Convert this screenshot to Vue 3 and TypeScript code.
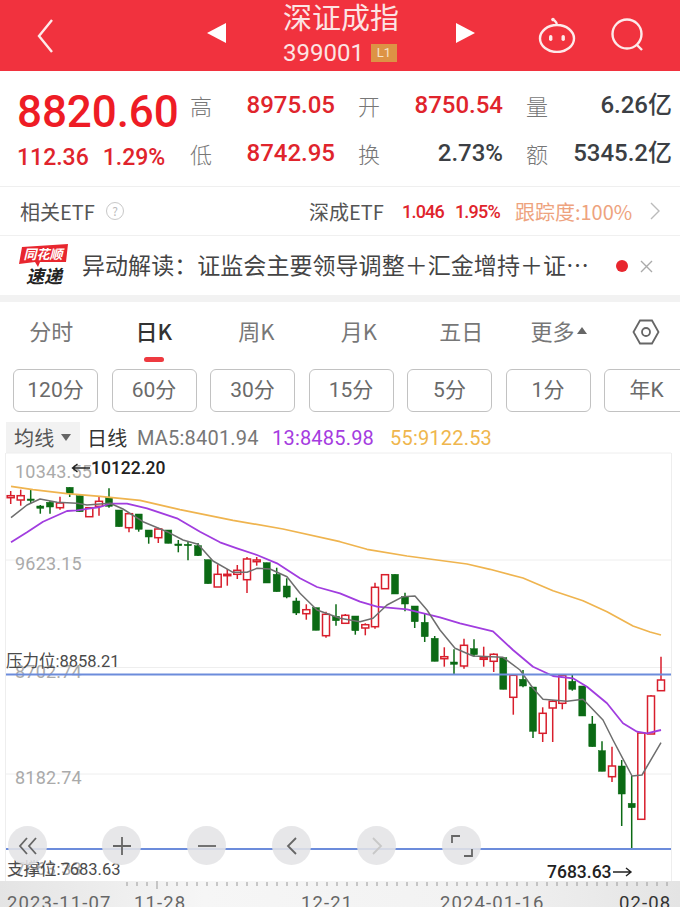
<template>
  <div class="page">
    <header class="top">
      <svg class="top__back" width="16" height="34" viewBox="0 0 16 34"><path d="M15 1 2 17l13 16" /></svg>
      <div class="top__center">
        <span class="arrow arrow--left"></span>
        <div class="top__name">
          <h1>深证成指</h1>
          <div class="top__code">399001<span class="badge">L1</span></div>
        </div>
        <span class="arrow arrow--right"></span>
      </div>
      <svg class="top__robot" width="40" height="36" viewBox="0 0 40 36">
        <path d="M20 8a17 13.5 0 1 1 0 27 17 13.5 0 1 1 0-27ZM20 8c0-3-2-4-3-5" />
        <circle cx="16" cy="2.6" r="1.8" class="solid" />
        <rect x="12" y="18" width="3.4" height="6" rx="1.7" class="solid" />
        <rect x="24.5" y="18" width="3.4" height="6" rx="1.7" class="solid" />
      </svg>
      <svg class="top__search" width="36" height="34" viewBox="0 0 36 34">
        <circle cx="17" cy="16" r="14.5" />
        <path d="m27 27 5 5" />
      </svg>
    </header>

    <section class="quote">
      <div class="quote__main">
        <div class="quote__price">8820.60</div>
        <div class="quote__change"><span>112.36</span><span>1.29%</span></div>
      </div>
      <div class="quote__grid">
        <template v-for="cell in quoteCells" :key="cell.label">
          <span class="quote__label">{{ cell.label }}</span>
          <span class="quote__value" :class="{ 'quote__value--up': cell.up }">{{ cell.value }}</span>
        </template>
      </div>
    </section>

    <section class="etf">
      <span class="etf__title">相关ETF</span>
      <span class="etf__help">?</span>
      <span class="etf__name">深成ETF</span>
      <span class="etf__num">1.046</span>
      <span class="etf__num etf__num--pct">1.95%</span>
      <span class="etf__track">跟踪度:100%</span>
      <svg class="etf__more" width="10" height="18" viewBox="0 0 10 18"><path d="m1 1 8 8-8 8" /></svg>
    </section>

    <section class="news">
      <svg class="news__logo" width="50" height="44" viewBox="0 0 50 44">
        <polygon points="3,3 49,0 47,18 21,18 19,23 16,18 0,20" fill="#e8262e" />
        <text x="24" y="15" class="news__logo-a">同花顺</text>
        <text x="25" y="39" class="news__logo-b">速递</text>
      </svg>
      <p class="news__text">异动解读：证监会主要领导调整＋汇金增持＋证…</p>
      <span class="news__dot"></span>
      <svg class="news__close" width="13" height="13" viewBox="0 0 13 13"><path d="m1 1 11 11M12 1 1 12" /></svg>
    </section>

    <nav class="tabs">
      <span v-for="tab in tabs" :key="tab" class="tabs__item" :class="{ 'tabs__item--active': tab === '日K' }">{{ tab }}</span>
      <span class="tabs__item tabs__more">更多<i></i></span>
      <svg class="tabs__gear" width="28" height="28" viewBox="0 0 28 28">
        <path d="M8 2.5h12L26.5 14 20 25.500H8L1.500 14Z" />
        <circle cx="14" cy="14" r="4" />
      </svg>
    </nav>

    <div class="chips">
      <span v-for="chip in chips" :key="chip" class="chip">{{ chip }}</span>
    </div>

    <div class="legend">
      <span class="legend__pick">均线<i></i></span>
      <span class="legend__kind">日线</span>
      <span class="legend__ma">MA5:8401.94</span>
      <span class="legend__ma legend__ma--13">13:8485.98</span>
      <span class="legend__ma legend__ma--55">55:9122.53</span>
    </div>

    <div class="chart">
      <svg width="680" height="455" viewBox="0 452 680 455">
        <defs>
          <linearGradient id="fade" x1="0" y1="0" x2="1" y2="0">
            <stop offset="0" stop-color="#e4e4e4" />
            <stop offset="0.3" stop-color="#f6f6f6" />
            <stop offset="0.7" stop-color="#f2f2f2" />
            <stop offset="1" stop-color="#e4e4e4" />
          </linearGradient>
        </defs>
        <rect x="0" y="881" width="680" height="26" fill="url(#fade)" />
        <g class="grid">
          <path d="M5.500 453V881M671.500 453V881" />
          <path v-for="y in gridLines" :key="y" :d="`M6 ${y}H671`" />
        </g>
        <text x="15" y="478" class="axis">10343.55</text>
        <text x="15" y="570" class="axis">9623.15</text>
        <text x="15" y="678" class="axis">8702.74</text>
        <text x="15" y="784" class="axis">8182.74</text>
        <text x="15" y="875" class="axis">7663.33</text>

        <g v-for="(c, i) in candles" :key="i" :class="c[5] ? 'up' : 'down'">
          <line :x1="c[0]" :x2="c[0]" :y1="c[3]" :y2="c[4]" />
          <rect :x="c[0] - 3.500" :y="c[1]" width="7" :height="c[2] - c[1]" />
        </g>

        <polyline class="ma ma--55" :points="ma55" />
        <polyline class="ma ma--13" :points="ma13" />
        <polyline class="ma ma--5" :points="ma5" />

        <path class="level" d="M6 674.500H671M6 849H671" />

        <text x="6" y="667" class="tag">压力位:8858.21</text>
        <text x="7" y="875" class="tag">支撑位:7683.63</text>
        <path class="pointer" d="M90 468H72.500m5-4-5 4 5 4" />
        <text x="91" y="474" class="mark">10122.20</text>
        <text x="547" y="878" class="mark">7683.63</text>
        <path class="pointer" d="M613 872h18m-5-4 5 4-5 4" />

        <path v-for="t in ticks" :key="t" class="tick" :d="`M${t} ${(t - 157) % 168 === 0 ? 881 : 882}v${(t - 157) % 168 === 0 ? 8 : 4}`" />
        <text x="7" y="909" class="date">2023-11-07</text>
        <text x="134" y="909" class="date">11-28</text>
        <text x="301" y="909" class="date">12-21</text>
        <text x="440" y="909" class="date">2024-01-16</text>
        <text x="619" y="909" class="date date--end">02-08</text>
      </svg>

      <div class="tools">
        <span class="tool tool--first">
          <svg width="20" height="20" viewBox="0 0 20 20"><path d="M9 2 2 10l7 8M18 2l-7 8 7 8" /></svg>
        </span>
        <span class="tool">
          <svg width="20" height="20" viewBox="0 0 20 20"><path d="M10 1v18M1 10h18" /></svg>
        </span>
        <span class="tool">
          <svg width="20" height="20" viewBox="0 0 20 20"><path d="M1 10h18" /></svg>
        </span>
        <span class="tool">
          <svg width="20" height="20" viewBox="0 0 20 20"><path d="m14 2-8 8 8 8" /></svg>
        </span>
        <span class="tool tool--off">
          <svg width="20" height="20" viewBox="0 0 20 20"><path d="m6 2 8 8-8 8" /></svg>
        </span>
        <span class="tool">
          <svg width="22" height="22" viewBox="0 0 22 22"><path d="M1 8V1h8M21 14v7h-8" /></svg>
        </span>
      </div>
    </div>
  </div>
</template>

<script setup lang="ts">
type Candle = [x: number, top: number, bottom: number, high: number, low: number, up: boolean]

const quoteCells = [
  { label: '高', value: '8975.05', up: true },
  { label: '开', value: '8750.54', up: true },
  { label: '量', value: '6.26亿', up: false },
  { label: '低', value: '8742.95', up: true },
  { label: '换', value: '2.73%', up: false },
  { label: '额', value: '5345.2亿', up: false },
]

const tabs = ['分时', '日K', '周K', '月K', '五日']
const chips = ['120分', '60分', '30分', '15分', '5分', '1分', '年K']
const gridLines = [453, 560, 667.5, 774]

// read off the reference candle by candle
const candles: Candle[] = [
  [10.7, 495.7, 497.7, 491, 504, true],
  [20.7, 495.7, 500, 489.7, 505.7, true],
  [30.7, 499, 500.5, 489.7, 503, false],
  [40.3, 506, 508.3, 505, 513.7, false],
  [50, 502.3, 507, 501, 513.7, false],
  [60, 503, 507.7, 496.7, 509.7, true],
  [69.7, 487.3, 493.7, 487.3, 497, false],
  [79.7, 495.7, 511.7, 495.7, 511.7, false],
  [89.3, 507.7, 516.7, 507.7, 516.7, true],
  [99, 501.3, 506.3, 497, 515.7, true],
  [109, 497.7, 506.3, 488.3, 507.7, false],
  [119, 510, 526.7, 510, 526.7, false],
  [129, 513.7, 527.7, 513, 532.3, true],
  [138.7, 514, 529.3, 514, 531.7, false],
  [148.7, 530, 537, 530, 543.7, false],
  [158.3, 529, 537.7, 527.7, 543, true],
  [168.3, 530, 543.3, 530, 543.3, false],
  [178.3, 544, 545.7, 540, 552.3, false],
  [188, 544.3, 545.7, 541, 560.3, false],
  [198, 545.7, 555.7, 543, 556, false],
  [208, 559.7, 583.7, 559.7, 583.7, false],
  [217.7, 574.3, 587, 564.3, 587, true],
  [227.3, 574.3, 575.7, 569, 585.7, true],
  [237.3, 570.3, 574.3, 565, 579, true],
  [247, 559, 579.7, 557, 593, true],
  [256.7, 560, 561.7, 557, 565.7, true],
  [266.7, 562.7, 583, 562.7, 583, false],
  [276.7, 574.3, 591.7, 567.7, 591.7, false],
  [286.7, 586, 597, 578.3, 598.3, false],
  [296.3, 601, 613, 597.7, 615, false],
  [306.3, 609.7, 613.7, 604.3, 619.7, true],
  [316, 607.7, 630.3, 607.7, 630.3, false],
  [326, 614.3, 635.7, 611.7, 637.7, true],
  [336, 616.3, 620.7, 604.3, 625.7, false],
  [345.3, 615.3, 623.3, 614, 624, true],
  [355.3, 616, 630.7, 616, 634.7, false],
  [365.3, 624.7, 628, 623.3, 635.3, true],
  [375, 587.3, 626.7, 582.7, 628.7, true],
  [385, 574.7, 588.7, 574.7, 588.7, true],
  [395, 574.3, 594, 574.3, 594, false],
  [405, 596.7, 604, 592.7, 611.3, false],
  [414.7, 606, 621.7, 606, 628, false],
  [424.7, 622.3, 636.7, 613.3, 642, false],
  [434.7, 638.3, 661.3, 636, 661.3, false],
  [444.3, 656.7, 658.7, 647.3, 666.7, true],
  [454, 662, 664.3, 649.3, 674, false],
  [464, 645.3, 666, 638.7, 668.7, true],
  [474, 648.7, 654.7, 639.3, 656.7, false],
  [483.7, 657.7, 659.3, 646.7, 666.7, true],
  [493.7, 654.3, 661.3, 653.3, 672, true],
  [503.3, 657.7, 689.3, 657.7, 689.3, false],
  [513.3, 675.3, 697.3, 675.3, 714.7, true],
  [523, 679.3, 686, 670, 687.3, false],
  [533, 687, 731.3, 687, 738, false],
  [542.7, 713.3, 733.3, 707.3, 742, true],
  [552.7, 701.3, 708, 700, 742, true],
  [562.3, 675.3, 703.3, 675, 709.3, true],
  [572.3, 681.3, 689.3, 674.7, 690.7, false],
  [582.3, 686, 716, 686, 716, false],
  [592.3, 724, 746.7, 716, 746.7, false],
  [602, 750.7, 771.3, 741.3, 771.3, false],
  [612, 766, 776.7, 746.7, 782, true],
  [621.7, 766, 794, 760, 826, false],
  [631.7, 803.3, 807.7, 776, 848.3, false],
  [641.3, 733, 819.3, 733, 819.3, true],
  [651, 696, 734, 695, 734, true],
  [661, 680, 690.7, 656.7, 690.7, true],
]

const ma55 = '11,486.3 33,489.7 67,493.7 100,496.3 140,500.3 180,509.7 233,520.3 283,529 340,541.7 367,549.3 407,556 467,564 490,569.3 523,578 553,590.7 583,600.7 607,611.7 633,626 650,632 661,635'
const ma13 = '11,542.3 27,532.3 43,521.7 67,511 77,510.3 100,507 110,503.7 127,503.7 147,508.3 177,518.3 200,531.7 220,542.3 237,548.3 257,555 277,563.3 300,578.3 317,587 340,593.3 360,601.7 377,606.7 407,609.3 440,617.3 460,623.3 493,631.3 513,650 533,666.7 553,676 573,678.3 587,686.7 607,703.3 623,723.3 637,731.7 647,733.3 661,730'
const ma5 = '11,517.7 27,505 40,499 57,502.3 77,503.3 87,505 110,503.3 123,509 143,521.7 167,531.7 183,540 198,544.3 213,561 233,572.3 247,572.3 257,568.3 270,569 287,576.7 300,593.3 317,610 340,618.3 360,621.7 373,618.3 387,605 403,596.7 415,596 427,610 440,630 455,648.3 473,656 503,657.3 520,670 533,688.3 543,699.3 567,701.3 583,699.3 603,720 613,740 632,776 642,775 661,742.7'

const ticks = Array.from({ length: 55 }, (_, i) => 127 + i * 10)
</script>

<style>
html,
body {
  margin: 0;
  background: #fff;
}
</style>

<style scoped>
.page {
  position: relative;
  width: 680px;
  height: 907px;
  overflow: hidden;
  background: #fff;
  font-family: 'Noto Sans CJK SC', 'Noto Sans', sans-serif;
  color: #444;
}

.top {
  height: 71px;
  background: #f1323e;
  display: flex;
  align-items: center;
  position: relative;
}

.top svg path,
.top svg circle {
  fill: none;
  stroke: #fdeaea;
  stroke-width: 2.4;
}

.top svg .solid {
  fill: #fdeaea;
  stroke: none;
}

.top__back {
  margin-left: 37px;
}

.top__center {
  position: absolute;
  left: 207px;
  width: 268px;
  top: 0;
  height: 71px;
  display: flex;
  align-items: center;
  justify-content: space-between;
}

.arrow {
  width: 0;
  height: 0;
  border-top: 10px solid transparent;
  border-bottom: 10px solid transparent;
  margin-top: -5px;
}

.arrow--left {
  border-right: 19px solid #fff;
}

.arrow--right {
  border-left: 19px solid #fff;
}

.top__name {
  align-self: flex-start;
  text-align: center;
  color: #fce4e4;
}

.top__name h1 {
  margin: 0;
  font-size: 29px;
  font-weight: 400;
  line-height: 32px;
}

.top__code {
  font-family: Roboto, sans-serif;
  font-size: 24px;
  line-height: 28px;
  margin-top: 7px;
  display: flex;
  align-items: center;
}

.badge {
  margin-left: 7px;
  width: 26px;
  height: 18px;
  background: #dd9345;
  color: #f8e3c8;
  font-size: 13px;
  line-height: 18px;
  text-align: center;
}

.top__robot {
  position: absolute;
  left: 537px;
  top: 17px;
}

.top__search {
  position: absolute;
  left: 610px;
  top: 18px;
}

.quote {
  height: 115px;
  display: flex;
  border-bottom: 1px solid #efefef;
}

.quote__main {
  width: 190px;
  padding-left: 17px;
  box-sizing: border-box;
  font-family: Roboto, sans-serif;
  color: #ee1c25;
}

.quote__price {
  font-size: 44px;
  font-weight: 500;
  line-height: 52px;
  margin-top: 15px;
  letter-spacing: -0.1px;
}

.quote__change {
  font-size: 23px;
  font-weight: 500;
  display: flex;
  gap: 14px;
  line-height: 28px;
  margin-top: 6px;
  color: #e0242c;
}

.quote__grid {
  flex: 1;
  padding-top: 17px;
  display: grid;
  grid-template-columns: 22px 146px 22px 146px 22px 124px;
  row-gap: 14px;
  grid-auto-rows: 34px;
  align-items: center;
}

.quote__label {
  font-size: 22px;
  line-height: 30px;
  color: #777;
  font-weight: 300;
}

.quote__value {
  font-family: Roboto, 'Noto Sans CJK SC', sans-serif;
  font-size: 24px;
  line-height: 34px;
  font-weight: 500;
  text-align: right;
  color: #3c3f44;
  padding-right: 23px;
}

.quote__value:nth-child(6n) {
  padding-right: 0;
}

.quote__value--up {
  color: #e0242c;
}

.etf {
  height: 48px;
  display: flex;
  align-items: center;
  padding-left: 20px;
  border-bottom: 1px solid #f0f0f0;
  font-size: 20px;
  color: #555;
}

.etf__title {
  width: 86px;
}

.etf__help {
  width: 16px;
  height: 16px;
  border: 1px solid #c8c8c8;
  border-radius: 50%;
  color: #bbb;
  font-size: 12px;
  line-height: 16px;
  text-align: center;
}

.etf__name {
  margin-left: 185px;
  width: 93px;
}

.etf__num {
  font-family: Roboto, sans-serif;
  font-weight: 500;
  font-size: 18px;
  letter-spacing: -0.8px;
  color: #e0242c;
}

.etf__num--pct {
  margin-left: 11px;
}

.etf__track {
  margin-left: 15px;
  color: #eea37e;
}

.etf__more {
  margin-left: 18px;
}

.etf__more path {
  fill: none;
  stroke: #bbb;
  stroke-width: 1.4;
}

.news {
  height: 59px;
  display: flex;
  align-items: center;
  position: relative;
  padding-left: 19px;
  border-bottom: 7px solid #f2f2f2;
}

.news__logo-a {
  font-size: 13px;
  font-weight: 700;
  font-style: italic;
  fill: #fff;
  text-anchor: middle;
}

.news__logo-b {
  font-size: 18px;
  font-weight: 700;
  font-style: italic;
  fill: #222;
  text-anchor: middle;
}

.news__text {
  margin: -3px 0 0 13px;
  font-size: 23px;
  white-space: nowrap;
  color: #444;
  letter-spacing: 0.05px;
}

.news__dot {
  position: absolute;
  left: 616px;
  top: 24px;
  width: 12px;
  height: 12px;
  border-radius: 50%;
  background: #e8262e;
}

.news__close {
  position: absolute;
  left: 640px;
  top: 24px;
}

.news__close path {
  fill: none;
  stroke: #aaa;
  stroke-width: 1.4;
}

.tabs {
  height: 60px;
  position: relative;
  display: grid;
  grid-template-columns: 102.500px 102.500px 102.500px 102.500px 102.500px 100px 1fr;
  align-items: center;
  font-size: 22px;
  color: #777;
}

.tabs__item {
  text-align: center;
  position: relative;
  padding-bottom: 4px;
}

.tabs__item--active {
  color: #333;
  font-weight: 500;
}

.tabs__item--active::after {
  content: '';
  position: absolute;
  left: 41px;
  width: 20px;
  height: 5px;
  bottom: -12px;
  border-radius: 3px;
  background: #ee3a40;
}

.tabs__more {
  display: flex;
  align-items: center;
  margin-left: 18px;
}

.tabs__more i {
  margin-left: 2px;
  width: 0;
  height: 0;
  border-left: 5px solid transparent;
  border-right: 5px solid transparent;
  border-bottom: 7px solid #666;
}

.tabs__gear {
  margin-left: 19px;
}

.tabs__gear path,
.tabs__gear circle {
  fill: none;
  stroke: #666;
  stroke-width: 1.8;
}

.chips {
  display: flex;
  gap: 13.500px;
  padding: 7px 0 0 13px;
  height: 43px;
}

.chip {
  flex: 0 0 85px;
  box-sizing: border-box;
  height: 43px;
  border: 1px solid #c2c2c2;
  border-radius: 6px;
  font-size: 21px;
  line-height: 41px;
  text-align: center;
  color: #6a6a6a;
  font-family: Roboto, 'Noto Sans CJK SC', sans-serif;
}

.legend {
  height: 31px;
  margin-top: 10px;
  display: flex;
  align-items: center;
  font-family: Roboto, 'Noto Sans CJK SC', sans-serif;
  font-size: 20px;
  letter-spacing: 0.2px;
}

.legend__pick {
  margin-left: 6px;
  width: 74px;
  height: 31px;
  box-sizing: border-box;
  padding-left: 8px;
  background: #f2f2f2;
  display: flex;
  align-items: center;
  color: #555;
}

.legend__pick i {
  margin-left: 7px;
  border-left: 5px solid transparent;
  border-right: 5px solid transparent;
  border-top: 7px solid #666;
}

.legend__kind {
  margin-left: 7px;
  color: #333;
  width: 50px;
}

.legend__ma {
  width: 135px;
  color: #777;
}

.legend__ma--13 {
  width: 118px;
  color: #a53ce0;
}

.legend__ma--55 {
  color: #efb64d;
}

.chart {
  position: absolute;
  left: 0;
  top: 452px;
  width: 680px;
  height: 455px;
}

.chart svg {
  display: block;
}

.grid path {
  stroke: #eee;
  stroke-width: 1;
  fill: none;
}

.axis {
  font-family: Roboto, sans-serif;
  font-size: 18px;
  fill: #aaa;
  letter-spacing: 0.2px;
}

.up line {
  stroke: #d81e2c;
  stroke-width: 1.5;
}

.up rect {
  fill: #fff;
  stroke: #d81e2c;
  stroke-width: 1.5;
}

.down line {
  stroke: #0b6a14;
  stroke-width: 1.5;
}

.down rect {
  fill: #0b6a14;
  stroke: #0b6a14;
  stroke-width: 0.5;
}

.ma {
  fill: none;
  stroke-linejoin: round;
}

.ma--55 {
  stroke: #efb44f;
  stroke-width: 1.7;
}

.ma--13 {
  stroke: #a13ddf;
  stroke-width: 1.8;
}

.ma--5 {
  stroke: #6e6e6e;
  stroke-width: 1.5;
}

.level {
  stroke: #6c8cdb;
  stroke-width: 2;
  fill: none;
}

.tag {
  font-family: Roboto, 'Noto Sans CJK SC', sans-serif;
  font-size: 16.500px;
  fill: #4a4a4a;
}

.mark {
  font-family: Roboto, sans-serif;
  font-size: 17.500px;
  font-weight: 500;
  fill: #222;
}

.pointer {
  fill: none;
  stroke: #222;
  stroke-width: 1.4;
}

.tick {
  stroke: #999;
  stroke-width: 1;
}

.date {
  font-family: Roboto, sans-serif;
  font-size: 18.500px;
  fill: #666;
  letter-spacing: 1.1px;
}

.date--end {
  fill: #333;
}

.tools {
  position: absolute;
  left: 8px;
  top: 374px;
  display: flex;
  gap: 46px;
}

.tool {
  width: 39px;
  height: 39px;
  border-radius: 50%;
  background: rgba(228, 228, 230, 0.88);
  display: flex;
  align-items: center;
  justify-content: center;
}

.tool--first {
  margin-right: 9px;
}

.tool path {
  fill: none;
  stroke: #666;
  stroke-width: 1.800;
}

.tool--off path {
  stroke: #c8c8c8;
}
</style>
